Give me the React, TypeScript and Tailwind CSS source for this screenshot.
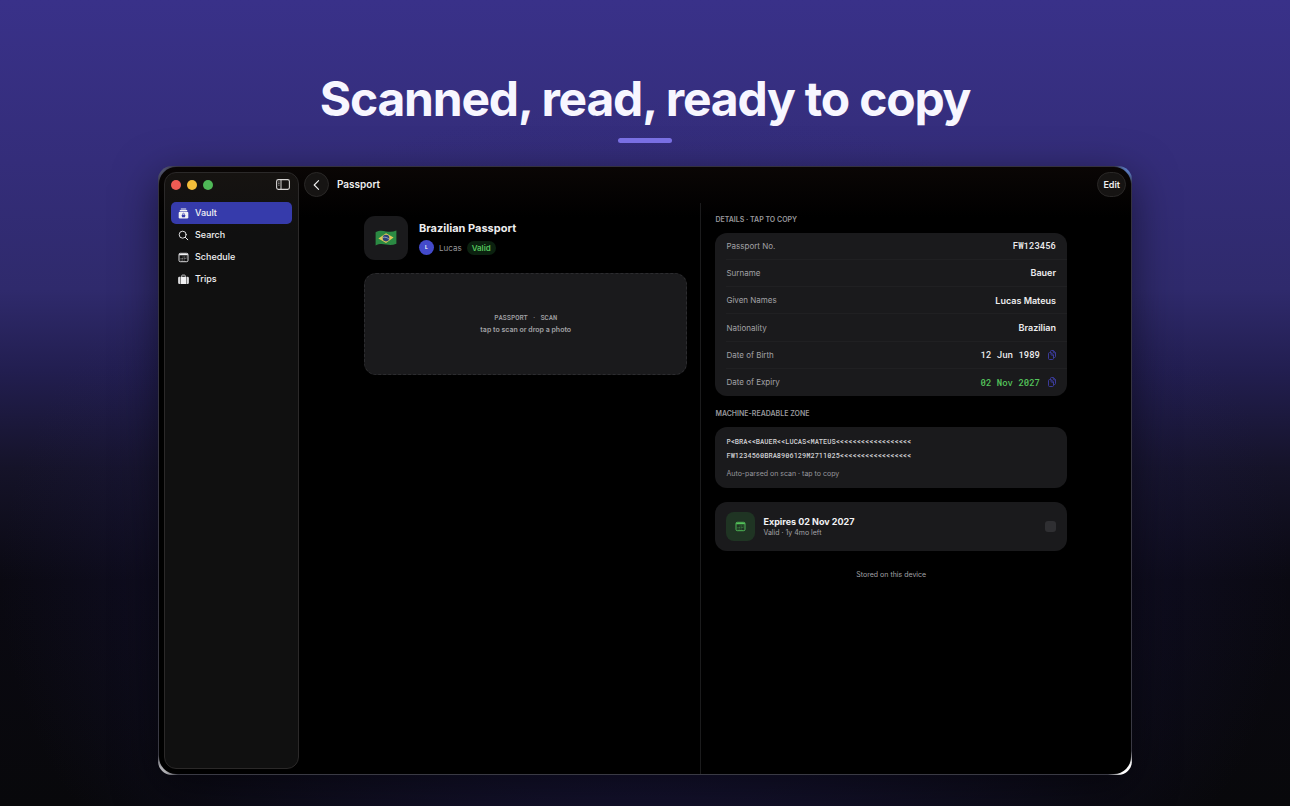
import type { ReactNode } from "react";

type Detail = { label: string; value: string; mono?: boolean; good?: boolean; copy?: boolean };

const details: Detail[] = [
  { label: "Passport No.", value: "FW123456", mono: true },
  { label: "Surname", value: "Bauer" },
  { label: "Given Names", value: "Lucas Mateus" },
  { label: "Nationality", value: "Brazilian" },
  { label: "Date of Birth", value: "12 Jun 1989", mono: true, copy: true },
  { label: "Date of Expiry", value: "02 Nov 2027", mono: true, copy: true, good: true },
];

const mrzLines = ["P<BRA<<BAUER<<LUCAS<MATEUS<<<<<<<<<<<<<<<<<<", "FW1234560BRA8906129M2711025<<<<<<<<<<<<<<<<<"];

const navItems = [
  { label: "Vault", Icon: VaultIcon, active: true },
  { label: "Search", Icon: SearchIcon, active: false },
  { label: "Schedule", Icon: CalendarIcon, active: false },
  { label: "Trips", Icon: SuitcaseIcon, active: false },
];

const monoFont = "font-['Roboto_Mono','DejaVu_Sans_Mono',monospace]";

export default function App() {
  return (
    <main className="flex min-h-screen flex-col items-center bg-[radial-gradient(ellipse_50%_60%_at_50%_72%,#2a247099,transparent),linear-gradient(to_bottom,#393189_0%,#342d7a_20%,#2f2a6c_36%,#221e50_46%,#151329_58%,#0a0912_72%,#08080b_100%)] px-[158px] pb-[31px] font-['Inter','Liberation_Sans',sans-serif] text-white">
      <h1 className="pt-[68px] text-5xl leading-[62px] font-bold tracking-tight whitespace-nowrap text-[#f7f6ff]">Scanned, read, ready to copy</h1>
      <div className="mt-2 h-[5px] w-[54px] shrink-0 rounded-full bg-[#7c72e8]" />
      <div className="mt-[23px] flex w-full flex-1 rounded-[14px] bg-[radial-gradient(circle_at_100%_0,#5c80c8_6px,transparent_18px),radial-gradient(circle_at_100%_100%,#fff_10px,transparent_24px),radial-gradient(circle_at_0_100%,#b0b0b4_8px,transparent_20px),radial-gradient(circle_at_0_0,#50536c_6px,transparent_20px),linear-gradient(to_bottom,#34313f,#3a3a44)] p-px shadow-[0_12px_44px_rgba(0,0,0,0.5)]">
        <div className="flex w-full overflow-hidden rounded-[17px] bg-[linear-gradient(to_bottom,#0a0605,#000_50px)]">
          <Sidebar />
          <PassportView />
        </div>
      </div>
    </main>
  );
}

function Sidebar() {
  return (
    <aside className="m-[5px] mr-0 flex w-[135px] shrink-0 flex-col rounded-xl border border-[#2b2929] bg-[linear-gradient(to_bottom,#161311,#101010_60px)] px-1.5">
      <div className="flex h-[23px] items-center justify-between pr-0.5">
        <div className="flex gap-1.5" aria-hidden="true">
          <span className="size-[10px] rounded-full bg-[#f05b54]" />
          <span className="size-[10px] rounded-full bg-[#f3bd3a]" />
          <span className="size-[10px] rounded-full bg-[#4fb857]" />
        </div>
        <button type="button" aria-label="Toggle sidebar" className="text-[#d6d4d3]">
          <SidebarIcon />
        </button>
      </div>
      <nav className="mt-1.5" aria-label="Main">
        {navItems.map(({ label, Icon, active }) => (
          <a
            key={label}
            href={`#${label.toLowerCase()}`}
            aria-current={active ? "page" : undefined}
            className={`flex h-[22px] items-center gap-1.5 rounded-[5px] px-[7px] text-[9px] font-medium text-[#f1f1f3] ${active ? "bg-[#363bab]" : ""}`}
          >
            <Icon />
            {label}
          </a>
        ))}
      </nav>
    </aside>
  );
}

function PassportView() {
  return (
    <section className="flex min-w-0 flex-1 flex-col">
      <header className="flex items-center gap-2 px-[5px] pt-[5px] text-[10px] font-semibold text-[#efefef]">
        <button type="button" aria-label="Back" className="flex size-[25px] items-center justify-center rounded-full border border-[#2a2827] bg-[#161413]">
          <svg width="12" height="12" viewBox="0 0 12 12" fill="none" stroke="currentColor" strokeWidth="1.1" strokeLinecap="round" strokeLinejoin="round">
            <path d="M7.6 1.6 3.2 6l4.400 4.400" />
          </svg>
        </button>
        <h2>Passport</h2>
        <button type="button" className="ml-auto h-[25px] rounded-full border border-[#2a2827] bg-[#161413] px-[5px] text-[9px]">Edit</button>
      </header>
      <div className="mt-1.5 grid flex-1 grid-cols-[12fr_13fr] pr-16 pl-[65px]">
        <div className="border-r border-[#1b1b1c] pt-[13px] pr-[13px]">
          <div className="flex items-center gap-[11px]">
            <div className="flex size-11 items-center justify-center rounded-[11px] bg-[#1a1a1c]">
              <FlagIcon />
            </div>
            <div>
              <h3 className="text-[11px] leading-[14px] font-bold text-[#ededee]">Brazilian Passport</h3>
              <div className="mt-[5px] flex items-center gap-[5px] text-[8px] text-[#98989c]">
                <span className="flex size-[15px] items-center justify-center rounded-full bg-[#434acb] text-[5px] font-bold text-white">L</span>
                Lucas
                <span className="rounded-full bg-[#0b210f] px-[5px] py-px leading-3 font-semibold text-[#54c45b]">Valid</span>
              </div>
            </div>
          </div>
          <button type="button" className="mt-[13px] flex h-[102px] w-full flex-col items-center justify-center rounded-xl border border-dashed border-[#2c2c2f] bg-[#1a1a1c] text-[7px] text-[#a2a2a6]">
            <span className={`${monoFont} leading-3 font-medium whitespace-pre`}>PASSPORT · SCAN</span>
            <span className="leading-3 font-semibold">tap to scan or drop a photo</span>
          </button>
        </div>
        <div className="pt-3 pl-[14px]">
          <SectionTitle>DETAILS · TAP TO COPY</SectionTitle>
          <ul className="mt-2 grid min-h-[163px] auto-rows-fr rounded-xl bg-[#1a1a1c] pl-[11px]">
            {details.map((row) => (
              <DetailRow key={row.label} row={row} />
            ))}
          </ul>
          <div className="mt-[13px]">
            <SectionTitle>MACHINE-READABLE ZONE</SectionTitle>
          </div>
          <button type="button" className="mt-2 block w-full rounded-xl bg-[#1a1a1c] px-[11px] py-2 text-left">
            {mrzLines.map((line) => (
              <span key={line} className={`block text-[7px] leading-[14px] font-medium text-[#cfcfd2] ${monoFont}`}>{line}</span>
            ))}
            <span className="mt-1 block text-[7px] leading-[13px] text-[#98989c]">Auto-parsed on scan · tap to copy</span>
          </button>
          <article className="mt-[14px] flex items-center gap-2 rounded-xl bg-[#1a1a1c] px-[11px] py-[10px]">
            <span className="flex size-[29px] items-center justify-center rounded-lg bg-[#1f3423] text-[#54c45b]"><CalendarIcon /></span>
            <div>
              <p className="text-[9px] leading-3 font-bold text-[#f1f1f3]">Expires 02 Nov 2027</p>
              <p className="text-[7px] leading-[10px] text-[#a2a2a6]">Valid · 1y 4mo left</p>
            </div>
            <span className="ml-auto size-[11px] rounded-[3px] bg-[#2f2f32]" />
          </article>
          <p className="mt-[18px] text-center text-[7px] leading-3 text-[#a2a2a6]">Stored on this device</p>
        </div>
      </div>
    </section>
  );
}

function SectionTitle({ children }: { children: ReactNode }) {
  return <h4 className="text-[7px] leading-[10px] font-semibold text-[#98989c]">{children}</h4>;
}

function DetailRow({ row }: { row: Detail }) {
  return (
    <li className="border-b border-[#202022] last:border-b-0">
      <button type="button" className="flex h-full w-full items-center pr-[11px]">
        <span className="text-[8px] text-[#a2a2a6]">{row.label}</span>
        <span className={`ml-auto text-[9px] ${row.mono ? `${monoFont} font-medium` : "font-semibold"} ${row.good ? "text-[#54c45b]" : "text-[#ededee]"}`}>{row.value}</span>
        {row.copy && (
          <span className="ml-2 text-[#3f40a8]"><CopyIcon /></span>
        )}
      </button>
    </li>
  );
}

function SidebarIcon() {
  return (
    <svg width="14" height="11" viewBox="0 0 14 11" fill="none" stroke="currentColor">
      <rect x="0.6" y="0.6" width="12.8" height="9.8" rx="1.8" strokeWidth="1.1" />
      <path d="M5 1v9" strokeWidth="1" />
      <path d="M2.2 3h1.3M2.2 4.6h1.3M2.2 6.2h1.3" strokeWidth="0.7" />
    </svg>
  );
}

function VaultIcon() {
  return (
    <svg width="11" height="11" viewBox="0 0 11 11" fill="currentColor">
      <rect x="2.6" y="0.5" width="5.8" height="1" rx="0.4" />
      <rect x="1.7" y="2" width="7.6" height="1.2" rx="0.4" />
      <rect x="0.7" y="3.7" width="9.6" height="6.9" rx="1.3" />
      <rect x="3.9" y="6.8" width="3.2" height="2.4" rx="0.4" fill="#363bab" />
      <path d="M4.6 7V6.100a.9.9 0 0 1 1.800 0V7" fill="none" stroke="#363bab" strokeWidth="0.6" />
    </svg>
  );
}

function SearchIcon() {
  return (
    <svg width="11" height="11" viewBox="0 0 11 11" fill="none" stroke="currentColor" strokeLinecap="round">
      <circle cx="4.7" cy="4.7" r="3.5" strokeWidth="0.9" />
      <path d="m7.4 7.4 2.4 2.4" strokeWidth="1" />
    </svg>
  );
}

function CalendarIcon() {
  return (
    <svg width="11" height="11" viewBox="0 0 11 11" fill="none" stroke="currentColor">
      <rect x="1" y="1.300" width="9" height="8.400" rx="1.300" strokeWidth="0.9" />
      <path d="M1.200 2.500h8.600" strokeWidth="1.500" />
      <path d="M4.600 5h4M2.600 6.500h6M2.600 8h4" strokeWidth="0.8" strokeDasharray="0.9 0.7" opacity="0.7" />
    </svg>
  );
}

function SuitcaseIcon() {
  return (
    <svg width="11" height="11" viewBox="0 0 11 11" fill="currentColor">
      <path d="M1.9 2.8v7.2h-.5A1.200 1.200 0 0 1 .2 8.800V4a1.200 1.200 0 0 1 1.200-1.200zM9.100 2.800v7.200h.5a1.200 1.200 0 0 0 1.200-1.200V4a1.200 1.200 0 0 0-1.200-1.200z" />
      <rect x="2.5" y="2.8" width="6" height="7.2" />
      <path d="M3.700 2.900V1.800c0-.4.3-.7.7-.7h2.200c.4 0 .7.3.7.7v1.100" fill="none" stroke="currentColor" strokeWidth="0.8" />
    </svg>
  );
}

function CopyIcon() {
  return (
    <svg width="8" height="10" viewBox="0 0 8 10" fill="none" stroke="currentColor" strokeWidth="0.9" strokeLinejoin="round">
      <path d="M2.500 2.600V1.500c0-.6.4-1 1-1h1.900l2.100 2.200v3.800c0 .6-.4 1-1 1h-.9" />
      <path d="M5.300.6v1.600c0 .4.2.6.6.6h1.500" />
      <path d="M1.500 2.600h1.700l2.300 2.400v3.500c0 .6-.4 1-1 1h-3c-.6 0-1-.4-1-1V3.600c0-.6.4-1 1-1z" />
      <path d="M3.100 2.700v1.900c0 .4.2.6.6.6h1.700" />
    </svg>
  );
}

function FlagIcon() {
  return (
    <svg width="22" height="18" viewBox="0 0 22 18">
      <path d="M.6 3.200C4 1.600 7.200 1.600 11 2.400s7 .6 10.400-.8v13.200c-3.400 1.400-6.600 1.600-10.400.8s-7-.8-10.400.8z" fill="#2b8a43" />
      <path d="M3.400 9.400 11 4.200l7.600 4.400L11 14z" fill="#dfc75a" />
      <circle cx="11" cy="9.100" r="3.300" fill="#2c4378" />
      <path d="M8 8.300c2.200-.4 4.300.2 5.900 1.700" fill="none" stroke="#c5d0dc" strokeWidth="0.7" />
    </svg>
  );
}
